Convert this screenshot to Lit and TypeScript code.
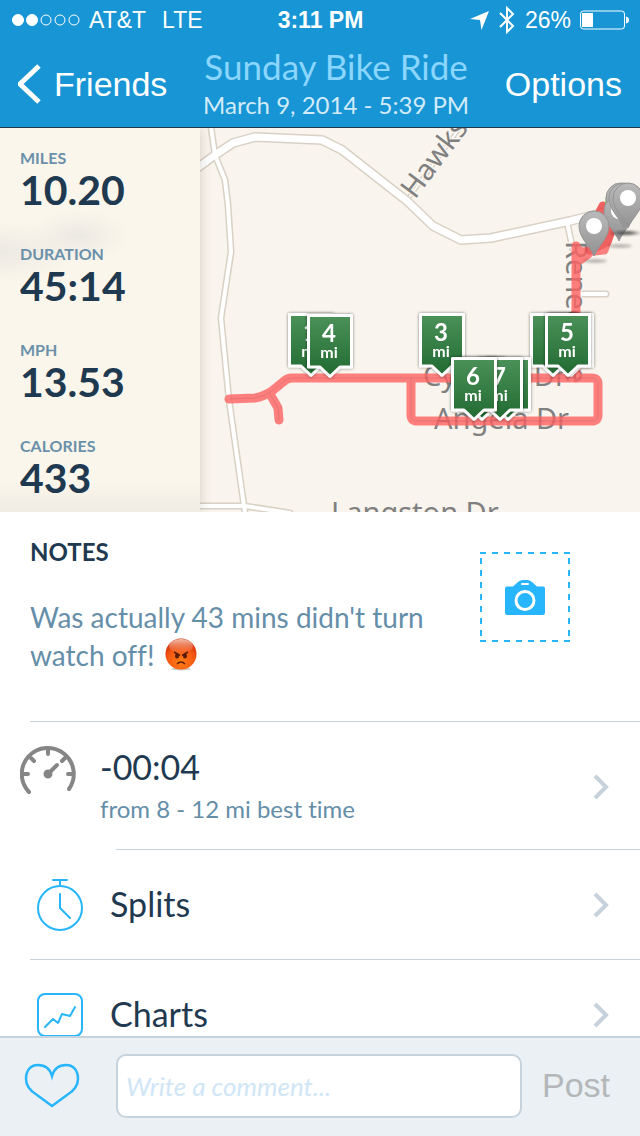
import { LitElement, html, css, svg } from "lit";
import { customElement, property } from "lit/decorators.js";

interface Stat { label: string; value: string; }
interface MilePin { x: number; y: number; mile?: string; }

const STATS: Stat[] = [
  { label: "MILES", value: "10.20" },
  { label: "DURATION", value: "45:14" },
  { label: "MPH", value: "13.53" },
  { label: "CALORIES", value: "433" },
];

/* x, y are the tip of each flag; later entries lie on top. Flags that are fully covered carry no label. */
const MILE_PINS: MilePin[] = [
  { x: 311, y: 378, mile: "1" },
  { x: 330, y: 379, mile: "4" },
  { x: 442, y: 378, mile: "3" },
  { x: 571, y: 378 },
  { x: 553, y: 378 },
  { x: 568, y: 378, mile: "5" },
  { x: 508, y: 422 },
  { x: 482, y: 422 },
  { x: 500, y: 422, mile: "7" },
  { x: 474, y: 422, mile: "6" },
];

const ROADS = [
  { w: 7, d: "M196 169L215 155L233 143L255 137L322 140L342 150L407 201L433 226L461 240L491 238L570 221L606 212" },
  { w: 4, d: "M210 120L215 155L225 180L228 205L231 252L221 318L229 400L246 520" },
  { w: 4, d: "M196 506H245L290 513" },
  { w: 4, d: "M567 222L573 250" },
  { w: 4, d: "M578 294H606" },
  { w: 2, d: "M410 196L470 114" },
];

@customElement("route-map")
export class RouteMap extends LitElement {
  static styles = css`
    :host { display: block; }
    svg { display: block; width: 100%; height: 100%; }
    .street { font: 400 29px "Noto Sans", sans-serif; fill: #808080; stroke: #f9f4ed; stroke-width: 3px; paint-order: stroke; }
    .mile { font: 700 24px Lato, sans-serif; fill: #fff; text-anchor: middle; }
    .unit { font: 700 16px Lato, sans-serif; fill: #fff; text-anchor: middle; }
  `;

  private flag(p: MilePin) {
    return svg`<g transform="translate(${p.x} ${p.y})" filter="url(#soft)">
      <path d="M-21.5 -63.5H21.5V-12H10L0 -2.5L-10 -12H-21.5Z" fill="url(#green)" stroke="#fff" stroke-width="3" stroke-linejoin="round"/>
      ${p.mile ? svg`<text class="mile" x="-1" y="-37">${p.mile}</text><text class="unit" x="-1" y="-21">mi</text>` : ""}
    </g>`;
  }

  private marker(x: number, y: number) {
    return svg`<g transform="translate(${x} ${y})">
      <ellipse cx="1" cy="5" rx="12" ry="1.500" fill="#000" opacity=".35" filter="url(#blur)"/>
      <path d="M0 0C-4 -10 -15 -18 -15 -30A15 15 0 0 1 15 -30C15 -18 4 -10 0 0Z" fill="url(#grey)" stroke="#949494" stroke-width="1"/>
      <circle cy="-30" r="8" fill="#fff"/>
    </g>`;
  }

  render() {
    return html`<svg viewBox="0 128 640 384" preserveAspectRatio="xMaxYMid slice" role="img" aria-label="Route map">
      <defs>
        <linearGradient id="green" x1="0" y1="0" x2="0" y2="1"><stop offset="0" stop-color="#4b9159"/><stop offset="1" stop-color="#216a31"/></linearGradient>
        <linearGradient id="grey" x1="0" y1="0" x2="0" y2="1"><stop offset="0" stop-color="#bababa"/><stop offset="1" stop-color="#929292"/></linearGradient>
        <filter id="soft" x="-30%" y="-30%" width="160%" height="160%"><feDropShadow dx="0" dy="0" stdDeviation="1.5" flood-color="#000" flood-opacity=".5"/></filter>
        <filter id="blur" x="-50%" y="-400%" width="200%" height="900%"><feGaussianBlur stdDeviation="1.5"/></filter>
      </defs>
      <rect x="-400" y="0" width="1400" height="900" fill="#f9f4ed"/>
      <g fill="none" stroke-linecap="round" stroke-linejoin="round">
        ${ROADS.map((r) => svg`<path d=${r.d} stroke="#d9d1c5" stroke-width=${r.w + 3}/>`)}
        ${ROADS.map((r) => svg`<path d=${r.d} stroke="#fff" stroke-width=${r.w}/>`)}
      </g>
      <text class="street" transform="translate(415 200) rotate(-53)">Hawks</text>
      <text class="street" x="423" y="386">Cynthia Dr</text>
      <text class="street" x="434" y="429">Angela Dr</text>
      <text class="street" x="331" y="523">Langston Dr</text>
      <text class="street" transform="translate(566 241) rotate(90)">Renee Ave</text>
      <g fill="none" stroke-linecap="round" stroke-linejoin="round" opacity=".8">
        <path d="M229 399L255 398Q265 396 272 391L283 382Q287 378 292 378H592Q598 378 598 384V415Q598 421 592 421H417Q411 421 411 415V378M270 394L278 408L279 420" stroke="#ff6262" stroke-width="9"/>
        <path d="M576 246V378M577 250L588 254L577 262M584 252L604 250L608 238" stroke="#ff6262" stroke-width="9"/>
        <path d="M229 399L255 398Q265 396 272 391L283 382Q287 378 292 378H592Q598 378 598 384V415Q598 421 592 421H417Q411 421 411 415V378M270 394L278 408L279 420" stroke="#e35353" stroke-width="1"/>
        <path d="M603 206L598 216L612 228L607 242L590 250" stroke="#ec3d3d" stroke-width="9"/>
      </g>
      <path d="M606 205Q606 190 616 184" fill="none" stroke="#7fc95a" stroke-width="2"/>
      ${this.marker(621, 228)}${this.marker(619, 241)}${this.marker(624, 228)}${this.marker(628, 228)}${this.marker(594, 256)}
      ${MILE_PINS.map((p) => this.flag(p))}
    </svg>`;
  }
}

@customElement("detail-row")
export class DetailRow extends LitElement {
  @property() heading = "";
  @property() detail = "";
  static styles = css`
    :host { display: block; }
    .row { box-sizing: border-box; display: flex; align-items: center; width: 100%; min-height: 109px; padding: 0 30px 0 36px; border: 0; background: none; color: #1f3a50; text-align: left; font-family: Lato, sans-serif; font-variant-ligatures: none; }
    .row.tall { min-height: 127px; padding: 2px 30px 0 20px; }
    .icon { flex: none; width: 74px; }
    .tall .icon { width: 80px; align-self: flex-start; padding-top: 22px; }
    .copy { flex: 1; display: flex; flex-direction: column; gap: 2px; padding-bottom: 2px; }
    .heading { font-size: 34px; line-height: 44px; }
    .detail { font-size: 24px; line-height: 36px; color: #658ea9; }
    .chevron { flex: none; width: 17px; height: 26px; }
  `;
  render() {
    return html`<button class="row ${this.detail ? "tall" : ""}">
      <span class="icon"><slot></slot></span>
      <span class="copy"><span class="heading">${this.heading}</span>${this.detail ? html`<span class="detail">${this.detail}</span>` : ""}</span>
      <svg class="chevron" viewBox="0 0 17 26" fill="none" stroke="#c7d1dc" stroke-width="4" aria-hidden="true"><path d="M2 2L13 13L2 24"/></svg>
    </button>`;
  }
}

@customElement("app-root")
export class AppRoot extends LitElement {
  static styles = css`
    :host { display: flex; flex-direction: column; height: 100vh; overflow: hidden; background: #fff; font-family: Lato, sans-serif; font-variant-ligatures: none; color: #1f3a50; }
    * { box-sizing: border-box; }
    button { margin: 0; font-family: inherit; cursor: pointer; }
    svg { display: block; }
    .top { flex: none; background: #1795d4; color: #fff; border-bottom: 1px solid #20384a; }
    .status { display: grid; grid-template-columns: 1fr auto 1fr; align-items: center; height: 40px; padding: 0 11px 0 12px; font: 400 23px/40px "Liberation Sans", sans-serif; }
    .carrier, .device { display: flex; align-items: center; }
    .carrier { gap: 8px; }
    .network { padding-left: 8px; }
    .device { justify-content: flex-end; gap: 9px; }
    .clock { font-weight: 700; }
    .nav { display: flex; justify-content: space-between; align-items: center; height: 87px; padding: 0 18px; }
    .link { display: flex; align-items: center; gap: 12px; padding: 0; border: 0; background: none; color: #fff; font: 400 34px/44px "Liberation Sans", sans-serif; }
    .titles { text-align: center; }
    .title { margin: 0; font-size: 35px; line-height: 42px; font-weight: 400; color: #8ad6ff; }
    .date { margin: 0; font-size: 24px; line-height: 36px; color: #d2ebfa; }
    .main { flex: 1; min-height: 0; overflow: hidden; }
    .hero { position: relative; display: flex; overflow: hidden; }
    .map { position: absolute; inset: 0; }
    .stats { position: relative; display: flex; flex-direction: column; gap: 32px; width: 200px; margin: 0; padding: 20px 20px 12px; box-shadow: 0 0 12px rgba(60, 50, 30, 0.2);
      background: radial-gradient(ellipse 50px 26px at 78px 108px, #ece9e3, transparent), radial-gradient(ellipse 80px 30px at 0 124px, #ece9e3, transparent), linear-gradient(transparent 354px, #f0ebe3), #fbf6eb; }
    .stat { display: flex; flex-direction: column; }
    .label { font-size: 16px; line-height: 20px; font-weight: 700; color: #6a90aa; }
    .value { margin: 0; font-size: 41px; line-height: 44px; font-weight: 700; }
    .notes { display: flex; justify-content: space-between; align-items: flex-start; min-height: 209px; padding: 24px 70px 0 0; margin-left: 30px; }
    .heading { margin: 0; font-size: 24px; line-height: 32px; font-weight: 700; }
    .note { margin: 0; padding-top: 30px; font-size: 28px; line-height: 38px; color: #658ea9; }
    .face { display: inline-block; vertical-align: -5px; margin-left: 3px; }
    .photo { flex: none; width: 90px; height: 90px; margin-top: 16px; padding: 0; border: 0; background: none; }
    .rule { height: 1px; margin: 0 0 0 30px; border: 0; background: #c6d2dc; }
    .rule.inset { margin-left: 116px; }
    .comment { flex: none; display: flex; align-items: center; gap: 20px; height: 100px; padding: 0 30px 2px 24px; border-top: 2px solid #c6d2dc; background: #eaf0f3; }
    .like { flex: none; padding: 0; border: 0; background: none; width: 56px; margin-right: 16px; }
    .field { flex: 1; min-width: 0; height: 64px; padding: 0 8px; border: 2px solid #c6d2dc; border-radius: 10px; background: #fff; font: 400 26px Lato, sans-serif; color: #1f3a50; }
    .field::placeholder { color: #d0e6f6; font-style: italic; opacity: 1; }
    .post { padding: 0 0 2px; border: 0; background: none; color: #b4b7b9; font: 400 34px/44px "Liberation Sans", sans-serif; }
  `;

  private header() {
    return html`<header class="top">
      <div class="status">
        <span class="carrier">
          <svg width="69" height="12" viewBox="0 0 69 12" fill="none" stroke="#fff" aria-hidden="true">
            <circle cx="6" cy="6" r="5.5" fill="#fff"/><circle cx="20" cy="6" r="5.5" fill="#fff"/>
            <circle cx="34" cy="6" r="5"/><circle cx="48" cy="6" r="5"/><circle cx="62" cy="6" r="5"/>
          </svg>
          <span>AT&amp;T</span><span class="network">LTE</span>
        </span>
        <span class="clock">3:11 PM</span>
        <span class="device">
          <svg width="19" height="19" viewBox="0 0 19 19" fill="#fff" aria-hidden="true"><path d="M19 0L11.500 19L10 9L0 8Z"/></svg>
          <svg width="18" height="28" viewBox="0 0 18 28" fill="none" stroke="#fff" stroke-width="2" aria-hidden="true"><path d="M2 7L15 20L9 26V2L15 8L2 21"/></svg>
          <span>26%</span>
          <svg width="49" height="20" viewBox="0 0 49 20" aria-hidden="true"><rect x=".5" y="1" width="44" height="18" rx="3" fill="none" stroke="#fff"/><rect x="2" y="3" width="11" height="14" fill="#fff"/><path d="M46 6.500Q49 7 49 10T46 13.500Z" fill="#fff"/></svg>
        </span>
      </div>
      <nav class="nav">
        <button class="link"><svg width="24" height="40" viewBox="0 0 24 40" fill="none" stroke="#fff" stroke-width="5" aria-hidden="true"><path d="M21 2L2 20L21 38"/></svg>Friends</button>
        <div class="titles"><h1 class="title">Sunday Bike Ride</h1><p class="date">March 9, 2014 - 5:39 PM</p></div>
        <button class="link">Options</button>
      </nav>
    </header>`;
  }

  private angryFace() {
    return html`<svg class="face" width="32" height="33" viewBox="0 0 32 33" role="img" aria-label="angry face">
      <defs><radialGradient id="skin" cx=".5" cy=".75" r=".7"><stop offset="0" stop-color="#ff7d12"/><stop offset=".6" stop-color="#f75a14"/><stop offset="1" stop-color="#cf2f0c"/></radialGradient>
      <linearGradient id="shine" x1="0" y1="0" x2="0" y2="1"><stop offset="0" stop-color="#f3c3ae"/><stop offset="1" stop-color="#f4764d" stop-opacity=".2"/></linearGradient></defs>
      <ellipse cx="16" cy="31" rx="10" ry="1.500" fill="#ccc"/><circle cx="16" cy="16" r="15.500" fill="url(#skin)"/><ellipse cx="16" cy="8" rx="12" ry="7" fill="url(#shine)"/>
      <path d="M9 14L15 17.500M23 14L17 17.500M12 26Q16 22 20 26" fill="none" stroke="#5a1b0a" stroke-width="1.500"/>
      <ellipse cx="12" cy="18" rx="2" ry="2.500" fill="#5a1b0a"/><ellipse cx="20" cy="18" rx="2" ry="2.500" fill="#5a1b0a"/>
    </svg>`;
  }

  render() {
    return html`
      ${this.header()}
      <main class="main">
        <section class="hero">
          <route-map class="map"></route-map>
          <dl class="stats">${STATS.map((s) => html`<div class="stat"><dt class="label">${s.label}</dt><dd class="value">${s.value}</dd></div>`)}</dl>
        </section>
        <section class="notes">
          <div><h2 class="heading">NOTES</h2><p class="note">Was actually 43 mins didn't turn<br>watch off! ${this.angryFace()}</p></div>
          <button class="photo" aria-label="Add photo">
            <svg width="90" height="90" viewBox="0 0 90 90" fill="none" aria-hidden="true">
              <path d="M0 1H90M0 89H90" stroke="#27b5fb" stroke-width="2" stroke-dasharray="6 6"/>
              <path d="M1 6V90M89 6V90" stroke="#27b5fb" stroke-width="2" stroke-dasharray="6 6"/>
              <path d="M27 34.500H33L38 30Q40 28 43 28H47Q50 28 52 30L57 34.500H63Q65 34.500 65 36.500V61Q65 63 63 63H27Q25 63 25 61V36.500Q25 34.500 27 34.500Z" fill="#27b5fb"/>
              <path d="M42 32H48" stroke="#fff" stroke-width="2" stroke-linecap="round"/><circle cx="45" cy="48.500" r="9" stroke="#fff" stroke-width="3"/>
            </svg>
          </button>
        </section>
        <hr class="rule">
        <detail-row heading="-00:04" detail="from 8 - 12 mi best time">
          <svg width="56" height="50" viewBox="0 0 56 50" fill="none" stroke="#868686" stroke-width="4" stroke-linecap="round" aria-hidden="true">
            <path d="M9 46A26 26 0 1 1 49 43M28 3V8M11 12L14 15M45 12L42 15M3 28H8M53 28H48"/><path d="M28 28L37 19"/><circle cx="28" cy="28" r="2.500" fill="#868686"/>
          </svg>
        </detail-row>
        <hr class="rule inset">
        <detail-row heading="Splits">
          <svg width="48" height="54" viewBox="0 0 48 54" fill="none" stroke="#27b5fb" stroke-width="2" stroke-linecap="round" aria-hidden="true">
            <circle cx="24" cy="30" r="22"/><path d="M17 2H31M24 2V8M24 16V30L34 40"/>
          </svg>
        </detail-row>
        <hr class="rule">
        <detail-row heading="Charts">
          <svg width="48" height="46" viewBox="0 0 48 46" fill="none" stroke="#27b5fb" stroke-width="2" stroke-linecap="round" stroke-linejoin="round" aria-hidden="true">
            <rect x="2" y="2" width="44" height="42" rx="7"/><path d="M9 35L17 27L22 31L26 22L34 24L39 15"/>
          </svg>
        </detail-row>
      </main>
      <footer class="comment">
        <button class="like" aria-label="Like"><svg width="56" height="46" viewBox="0 0 56 46" fill="none" stroke="#27b5fb" stroke-width="2.500" aria-hidden="true"><path d="M28 13Q25 2 14 2C6 2 2 8 2 16C2 24 8 29 13 32L28 43L43 32C48 29 54 24 54 16C54 8 50 2 42 2Q31 2 28 13Z"/></svg></button>
        <input class="field" type="text" aria-label="Comment" placeholder="Write a comment...">
        <button class="post">Post</button>
      </footer>`;
  }
}
